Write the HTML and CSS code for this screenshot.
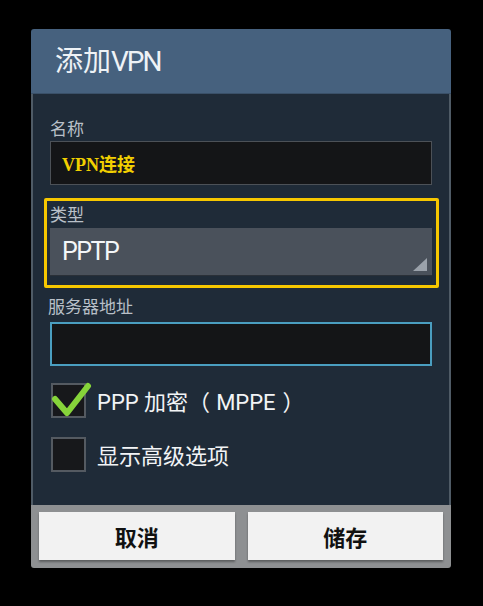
FILE: index.html
```html
<!DOCTYPE html>
<html lang="zh">
<head>
<meta charset="utf-8">
<title>添加VPN</title>
<link rel="stylesheet" href="styles.css">
</head>
<body>
<div class="dialog">
  <div class="title">添加<span class="title-latin">VPN</span></div>
  <div class="content">
    <div class="label">名称</div>
    <div class="input name-input"><span class="name-text">VPN连接</span></div>

    <div class="highlight">
      <div class="label">类型</div>
      <div class="spinner">
        <span class="spinner-text">PPTP</span>
        <span class="spinner-arrow"></span>
      </div>
    </div>

    <div class="label label-server">服务器地址</div>
    <div class="input server-input"></div>

    <div class="check-row check-first">
      <span class="checkbox">
        <svg class="checkmark" width="42" height="36" viewBox="0 0 42 36"><path d="M4 16 L16 30 L37 3" fill="none" stroke="#86d43a" stroke-width="6" stroke-linecap="round" stroke-linejoin="round"/></svg>
      </span>
      <span class="check-text">PPP 加密<span class="paren-open">（</span>MPPE<span class="paren-close">）</span></span>
    </div>
    <div class="check-row">
      <span class="checkbox"></span>
      <span class="check-text">显示高级选项</span>
    </div>
  </div>
  <div class="buttons">
    <div class="btn">取消</div>
    <div class="btn">储存</div>
  </div>
</div>
</body>
</html>
```

FILE: styles.css
```css
html, body {
  margin: 0;
  padding: 0;
  background: #000;
}
body {
  font-family: "Noto Sans CJK SC", "Noto Sans", sans-serif;
  padding-top: 29px;
  padding-left: 31px;
}
.dialog {
  width: 420px;
  border-radius: 3px;
  overflow: hidden;
}
.title {
  height: 65px;
  background: #46617e;
  color: #eef2f6;
  font-family: "Roboto", "Noto Sans CJK SC", sans-serif;
  font-size: 28px;
  line-height: 65px;
  padding-left: 24px;
  border-bottom: 1px solid #3a5068;
  box-sizing: border-box;
}
.title-latin {
  letter-spacing: -2px;
}
.content {
  background: #1f2b38;
  padding: 24px 17px 33px 17px;
  border-left: 2px solid #4f5b66;
  border-right: 2px solid #4f5b66;
}
.label {
  font-size: 17px;
  line-height: 20px;
  height: 20px;
  color: #b9c0c8;
}
.input {
  box-sizing: border-box;
  height: 44px;
  background: #141517;
  margin-top: 3px;
}
.name-input {
  border: 1px solid #4c5157;
  padding-left: 11px;
  display: flex;
  align-items: center;
}
.name-text {
  font-family: "Liberation Serif", "Noto Sans CJK SC", serif;
  font-weight: bold;
  font-size: 18px;
  color: #f2d000;
}
.highlight {
  margin: 13px -7px 0 -6px;
  border: 3px solid #f6c700;
  border-radius: 2px;
  padding: 3px 4px 10px 3px;
}
.spinner {
  position: relative;
  margin-top: 4px;
  height: 47px;
  background: #4a515b;
  box-shadow: 0 1px 0 #2a3038;
  display: flex;
  align-items: center;
  padding-left: 12px;
}
.spinner-text {
  font-family: "Roboto", sans-serif;
  font-size: 25px;
  letter-spacing: -1.5px;
  color: #f4f6f8;
}
.spinner-arrow {
  position: absolute;
  right: 5px;
  bottom: 4px;
  width: 0;
  height: 0;
  border-left: 14px solid transparent;
  border-bottom: 13px solid #9aa1aa;
}
.label-server {
  margin-top: 8px;
  margin-left: -2px;
}
.server-input {
  margin-top: 6px;
  border: 2px solid #4a9ec0;
}
.check-row {
  display: flex;
  align-items: center;
  height: 35px;
  margin-top: 17px;
}
.check-row + .check-row {
  margin-top: 19px;
}
.checkbox {
  position: relative;
  box-sizing: border-box;
  width: 35px;
  height: 35px;
  margin-left: 1px;
  background: #17181b;
  border: 2px solid #545a61;
  flex: none;
}
.checkmark {
  position: absolute;
  left: -2px;
  top: -2px;
  overflow: visible;
}
.check-text {
  margin-left: 11px;
  padding-top: 5px;
  font-family: "Roboto", "Noto Sans CJK SC", sans-serif;
  font-size: 22px;
  color: #f2f4f6;
  line-height: 1;
}
.paren-open {
  margin-right: 6px;
}
.paren-close {
  margin-left: 7px;
}
.buttons {
  display: flex;
  gap: 13px;
  background: #8e9092;
  padding: 7px 8px 8px 8px;
}
.btn {
  flex: 1;
  height: 48px;
  background: #f2f2f2;
  box-shadow: 0 2px 2px rgba(0,0,0,0.35);
  display: flex;
  align-items: center;
  justify-content: center;
  font-size: 22px;
  font-weight: bold;
  color: #111;
}
```
